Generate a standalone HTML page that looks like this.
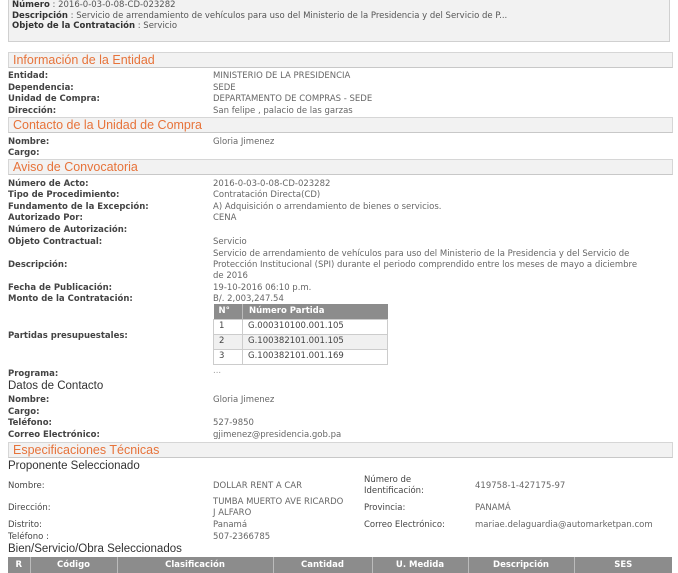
<!DOCTYPE html>
<html><head><meta charset="utf-8"><style>
*{margin:0;padding:0;box-sizing:border-box}
body{width:678px;height:573px;overflow:hidden;background:#fff;font-family:"DejaVu Sans","Liberation Sans",sans-serif;font-size:8.5px;color:#333;position:relative}
.a{position:absolute;white-space:nowrap;line-height:11px;margin-top:2px}
.l{font-weight:bold;color:#444;left:8px}
.v{color:#666;left:213px}
.h{position:absolute;left:8px;width:665px;height:16px;background:#f2f2f2;border:1px solid #d6d6d6;border-bottom:1px solid #c8c8c8;color:#e7733a;font-size:12.5px;line-height:14px;padding-left:4px;font-family:"Liberation Sans",sans-serif}
.s{position:absolute;left:8px;font-size:11.5px;color:#333;line-height:13px;font-family:"Liberation Sans",sans-serif;margin-top:1px}
table{border-collapse:collapse;position:absolute}
td,th{font-size:8.5px;line-height:13px}
</style></head><body>
<div style="position:absolute;left:8px;top:-2px;width:662px;height:44px;background:#f2f2f2;border:1px solid #d0d0d0;border-top:none"></div>
<div class="a" style="left:12px;top:-2px"><b>Número</b> <span style="color:#555">: 2016-0-03-0-08-CD-023282</span></div>
<div class="a" style="left:12px;top:9px"><b>Descripción</b> <span style="color:#555">: Servicio de arrendamiento de vehículos para uso del Ministerio de la Presidencia y del Servicio de P...</span></div>
<div class="a" style="left:12px;top:19px"><b>Objeto de la Contratación</b> <span style="color:#555">: Servicio</span></div>

<div class="h" style="top:52px">Información de la Entidad</div>
<div class="a l" style="top:69px">Entidad:</div><div class="a v" style="top:69px">MINISTERIO DE LA PRESIDENCIA</div>
<div class="a l" style="top:81px">Dependencia:</div><div class="a v" style="top:81px">SEDE</div>
<div class="a l" style="top:92px">Unidad de Compra:</div><div class="a v" style="top:92px">DEPARTAMENTO DE COMPRAS - SEDE</div>
<div class="a l" style="top:104px">Dirección:</div><div class="a v" style="top:104px">San felipe , palacio de las garzas</div>

<div class="h" style="top:117px">Contacto de la Unidad de Compra</div>
<div class="a l" style="top:135px">Nombre:</div><div class="a v" style="top:135px">Gloria Jimenez</div>
<div class="a l" style="top:146px">Cargo:</div>

<div class="h" style="top:159px">Aviso de Convocatoria</div>
<div class="a l" style="top:177px">Número de Acto:</div><div class="a v" style="top:177px">2016-0-03-0-08-CD-023282</div>
<div class="a l" style="top:188px">Tipo de Procedimiento:</div><div class="a v" style="top:188px">Contratación Directa(CD)</div>
<div class="a l" style="top:200px">Fundamento de la Excepción:</div><div class="a v" style="top:200px">A) Adquisición o arrendamiento de bienes o servicios.</div>
<div class="a l" style="top:211px">Autorizado Por:</div><div class="a v" style="top:211px">CENA</div>
<div class="a l" style="top:223px">Número de Autorización:</div>
<div class="a l" style="top:235px">Objeto Contractual:</div><div class="a v" style="top:235px">Servicio</div>
<div class="a v" style="top:247px">Servicio de arrendamiento de vehículos para uso del Ministerio de la Presidencia y del Servicio de</div>
<div class="a v" style="top:258px">Protección Institucional (SPI) durante el periodo comprendido entre los meses de mayo a diciembre</div>
<div class="a v" style="top:269px">de 2016</div>
<div class="a l" style="top:258px">Descripción:</div>
<div class="a l" style="top:281px">Fecha de Publicación:</div><div class="a v" style="top:281px">19-10-2016 06:10 p.m.</div>
<div class="a l" style="top:292px">Monto de la Contratación:</div><div class="a v" style="top:292px">B/. 2,003,247.54</div>
<table style="left:213px;top:304px;width:175px">
<tr style="background:#8c8c8c;color:#fff"><th style="width:29px;text-align:left;padding-left:5px;height:15px">N°</th><th style="text-align:left;padding-left:6px;border-left:1px solid #bbb">Número Partida</th></tr>
<tr><td style="border:1px solid #ccc;padding-left:5px;height:15px;color:#444">1</td><td style="border:1px solid #ccc;padding-left:5px;color:#444">G.000310100.001.105</td></tr>
<tr style="background:#f0f0f0"><td style="border:1px solid #ccc;padding-left:5px;height:15px;color:#444">2</td><td style="border:1px solid #ccc;padding-left:5px;color:#444">G.100382101.001.105</td></tr>
<tr><td style="border:1px solid #ccc;padding-left:5px;height:15px;color:#444">3</td><td style="border:1px solid #ccc;padding-left:5px;color:#444">G.100382101.001.169</td></tr>
</table>
<div class="a l" style="top:329px">Partidas presupuestales:</div>
<div class="a l" style="top:367px">Programa:</div><div class="a v" style="top:364px;color:#999">...</div>
<div class="s" style="top:379px">Datos de Contacto</div>
<div class="a l" style="top:393px">Nombre:</div><div class="a v" style="top:393px">Gloria Jimenez</div>
<div class="a l" style="top:405px">Cargo:</div>
<div class="a l" style="top:416px">Teléfono:</div><div class="a v" style="top:416px">527-9850</div>
<div class="a l" style="top:428px">Correo Electrónico:</div><div class="a v" style="top:428px">gjimenez@presidencia.gob.pa</div>

<div class="h" style="top:442px">Especificaciones Técnicas</div>
<div class="s" style="top:459px">Proponente Seleccionado</div>
<div class="a l" style="top:479px;font-weight:normal;color:#444">Nombre:</div><div class="a v" style="top:479px">DOLLAR RENT A CAR</div>
<div class="a" style="left:364px;top:473px;color:#444">Número de</div><div class="a" style="left:364px;top:484px;color:#444">Identificación:</div>
<div class="a" style="left:475px;top:479px;color:#666">419758-1-427175-97</div>
<div class="a l" style="top:501px;font-weight:normal;color:#444">Dirección:</div>
<div class="a v" style="top:495px">TUMBA MUERTO AVE RICARDO</div><div class="a v" style="top:506px">J ALFARO</div>
<div class="a" style="left:364px;top:501px;color:#444">Provincia:</div><div class="a" style="left:475px;top:501px;color:#666">PANAMÁ</div>
<div class="a l" style="top:518px;font-weight:normal;color:#444">Distrito:</div><div class="a v" style="top:518px">Panamá</div>
<div class="a" style="left:364px;top:518px;color:#444">Correo Electrónico:</div><div class="a" style="left:475px;top:518px;color:#666">mariae.delaguardia@automarketpan.com</div>
<div class="a l" style="top:530px;font-weight:normal;color:#444">Teléfono :</div><div class="a v" style="top:530px">507-2366785</div>
<div class="s" style="top:542px">Bien/Servicio/Obra Seleccionados</div>
<table style="left:8px;top:557px;width:664px;background:#8c8c8c;color:#fff;table-layout:fixed">
<colgroup><col style="width:22px"><col style="width:87px"><col style="width:156px"><col style="width:99px"><col style="width:96px"><col style="width:106px"><col style="width:98px"></colgroup>
<tr style="height:16px"><th>R</th><th style="border-left:1px solid #bbb">Código</th><th style="border-left:1px solid #bbb">Clasificación</th><th style="border-left:1px solid #bbb">Cantidad</th><th style="border-left:1px solid #bbb">U. Medida</th><th style="border-left:1px solid #bbb">Descripción</th><th style="border-left:1px solid #bbb">SES</th></tr>
</table>
</body></html>
